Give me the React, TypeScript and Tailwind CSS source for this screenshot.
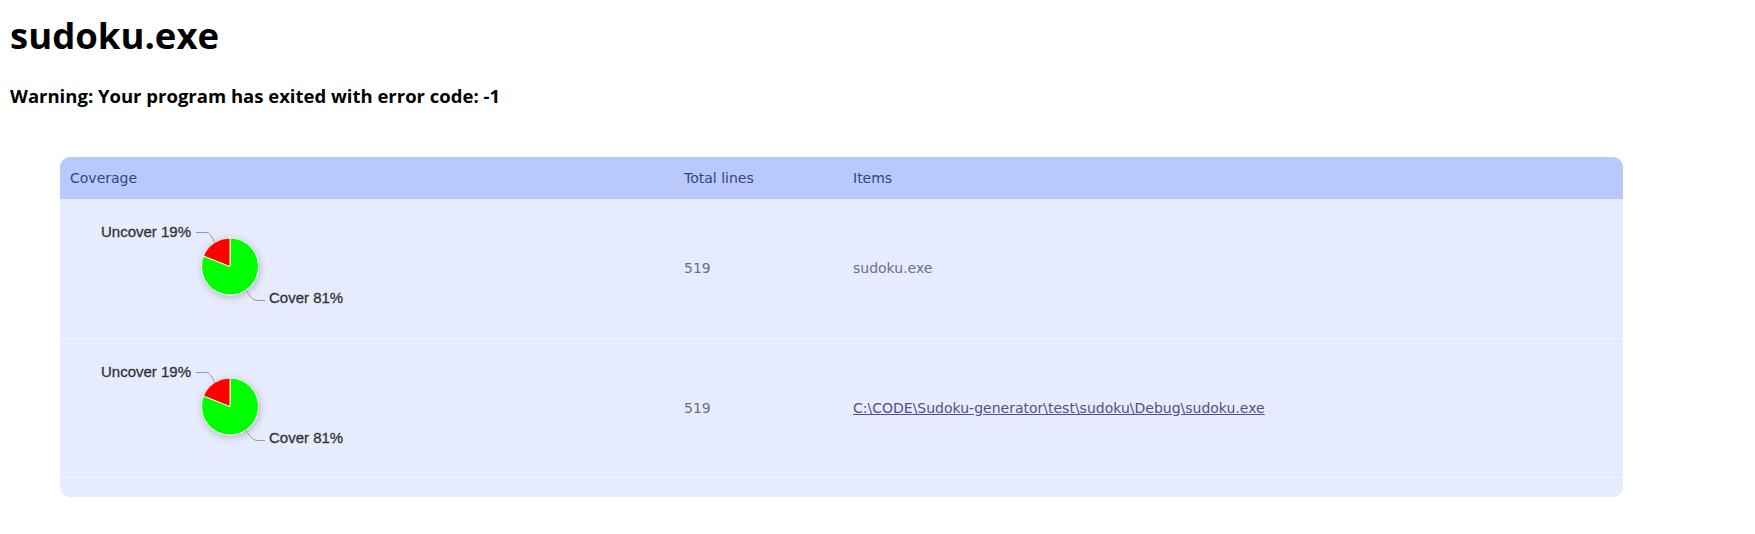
import React from 'react'

function CoveragePie({ height }: { height: number }) {
  const cx = 170
  const cy = 67.5
  const r = 28.5
  // red slice: 19% counter-clockwise from 12 o'clock
  const a = 0.19 * Math.PI * 2
  const ex = cx - r * Math.sin(a)
  const ey = cy - r * Math.cos(a)
  const id = `shadow-${height}`

  return (
    <svg width="330" height={height} className="block">
      <defs>
        <filter id={id} x="-50%" y="-50%" width="200%" height="200%">
          <feDropShadow dx="1" dy="2" stdDeviation="3.5" floodColor="#000" floodOpacity="0.22" />
        </filter>
      </defs>
      <g filter={`url(#${id})`}>
        <path
          d={`M${cx},${cy} L${ex},${ey} A${r},${r} 0 1,0 ${cx},${cy - r} Z`}
          fill="#00ff00"
          stroke="#e9ffe9"
          strokeWidth="1"
        />
        <path
          d={`M${cx},${cy} L${cx},${cy - r} A${r},${r} 0 0,0 ${ex},${ey} Z`}
          fill="#ff0000"
          stroke="#ffe9e0"
          strokeWidth="1"
        />
      </g>
      {/* connectors */}
      <path d="M136,33.5 L146,33.5 C150,33.5 152,38 155,44" fill="none" stroke="#9a9a9a" strokeWidth="1" />
      <path d="M186,91 C189,96 192,101.5 198,101.5 L205,101.5" fill="none" stroke="#9a9a9a" strokeWidth="1" />
      <text
        x="131"
        y="38"
        textAnchor="end"
        fontFamily="'Liberation Sans', Arial, sans-serif"
        fontSize="15"
        fill="#333333"
        stroke="#333333"
        strokeWidth="0.3"
      >
        Uncover 19%
      </text>
      <text
        x="209"
        y="104"
        fontFamily="'Liberation Sans', Arial, sans-serif"
        fontSize="15"
        fill="#333333"
        stroke="#333333"
        strokeWidth="0.3"
      >
        Cover 81%
      </text>
    </svg>
  )
}

export default function App() {
  return (
    <div className="min-h-screen bg-white px-[10px] pt-[11px] text-black font-['Open_Sans',sans-serif]">
      <h1 className="text-[36.5px] leading-[48px] font-bold">sudoku.exe</h1>
      <h3 className="mt-[25px] text-[18.5px] leading-[24px] font-bold">
        Warning: Your program has exited with error code: -1
      </h3>

      {/* Coverage table */}
      <div className="mt-[49px] ml-[50px] w-[1563px] rounded-[10px] overflow-hidden bg-[#e6ebfd] font-['DejaVu_Sans',sans-serif] text-[14px]">
        <div className="flex items-center h-[42px] bg-[#b9c9fb] text-[#33457f]">
          <div className="w-[614px] pl-[10px]">Coverage</div>
          <div className="w-[169px] pl-[10px]">Total lines</div>
          <div className="flex-1 pl-[10px]">Items</div>
        </div>

        <div className="flex items-center h-[140px] border-b border-[#f2f4fe] text-[#6c6f88]">
          <div className="w-[614px]">
            <CoveragePie height={139} />
          </div>
          <div className="w-[169px] pl-[10px]">519</div>
          <div className="flex-1 pl-[10px]">sudoku.exe</div>
        </div>

        <div className="flex items-center h-[139px] border-b border-[#f2f4fe] text-[#6c6f88]">
          <div className="w-[614px]">
            <CoveragePie height={138} />
          </div>
          <div className="w-[169px] pl-[10px]">519</div>
          <div className="flex-1 pl-[10px]">
            <a href="#" className="text-[#5b4b8c] underline">
              C:\CODE\Sudoku-generator\test\sudoku\Debug\sudoku.exe
            </a>
          </div>
        </div>

        <div className="h-[19px]" />
      </div>
    </div>
  )
}
